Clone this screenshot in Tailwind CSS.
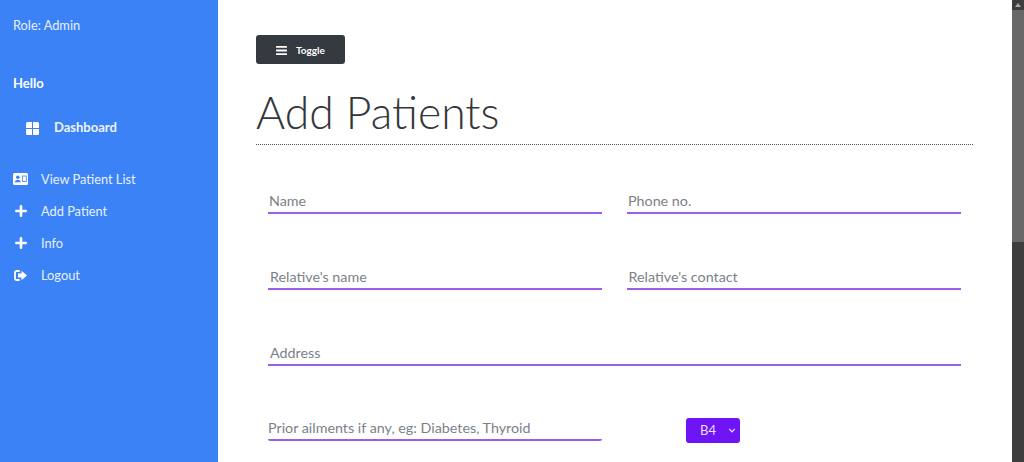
<!DOCTYPE html>
<html lang="en">
<head>
    <meta charset="UTF-8">
    <meta name="viewport" content="width=device-width, initial-scale=1.0">
    <title>Add Patients</title>
    <script src="https://cdn.jsdelivr.net/npm/@tailwindcss/browser@4"></script>
</head>
<body class="bg-white font-['Lato',sans-serif] overflow-hidden">
    <div class="flex h-[462px] overflow-hidden">
        <!-- Sidebar -->
        <aside class="w-[218px] shrink-0 bg-[#3b82f6] text-white">
            <p class="pl-[13px] pt-[17px] text-[12.8px] leading-[17px] text-[#e8f0fe]">Role: Admin</p>
            <h3 class="pl-[13px] pt-[40px] text-[13px] leading-[18px] font-bold">Hello</h3>
            <a class="flex items-center pl-[26px] mt-[27px] h-[18px] text-[13px] font-bold text-[#eef4ff]">
                <svg class="w-[13px] h-[13px] mr-[15px]" viewBox="0 0 13 13" fill="#fff"><path d="M0 1.5A1.5 1.5 0 0 1 1.5 0H6v6H0zM7 0h4.500A1.500 1.500 0 0 1 13 1.500V6H7zM0 7h6v6H1.500A1.500 1.500 0 0 1 0 11.500zM7 7h6v4.500a1.500 1.500 0 0 1-1.500 1.500H7z"/></svg>
                Dashboard
            </a>
            <nav class="mt-[33px] flex flex-col gap-[14px] text-[12.8px] leading-[18px] text-[#e8f0fe]">
                <a class="flex items-center h-[18px] pl-[13px]">
                    <svg class="w-[15px] h-[12px] mr-[13px]" viewBox="0 0 15 12"><rect width="15" height="12" rx="1.500" fill="#fff"/><circle cx="4.800" cy="4.300" r="1.800" fill="#3b82f6"/><path d="M1.800 9.300c0-1.700 1.300-2.600 3-2.600s3 .9 3 2.600z" fill="#3b82f6"/><rect x="9.500" y="3" width="3.800" height="5.500" fill="none" stroke="#3b82f6" stroke-width=".8"/></svg>
                    View Patient List
                </a>
                <a class="flex items-center h-[18px] pl-[15px]">
                    <svg class="w-[12px] h-[12px] mr-[14px]" viewBox="0 0 12 12" fill="none" stroke="#fff" stroke-width="2.600" stroke-linecap="round"><path d="M6 1.300v9.400M1.300 6h9.400"/></svg>
                    Add Patient
                </a>
                <a class="flex items-center h-[18px] pl-[15px]">
                    <svg class="w-[12px] h-[12px] mr-[14px]" viewBox="0 0 12 12" fill="none" stroke="#fff" stroke-width="2.600" stroke-linecap="round"><path d="M6 1.300v9.400M1.300 6h9.400"/></svg>
                    Info
                </a>
                <a class="flex items-center h-[18px] pl-[14px]">
                    <svg class="w-[13px] h-[11px] mr-[14px]" viewBox="0 0 13 11"><path d="M5 1H2.500A1.500 1.500 0 0 0 1 2.500v6A1.500 1.500 0 0 0 2.500 10H5" fill="none" stroke="#fff" stroke-width="1.800" stroke-linecap="round"/><path d="M7.500.8 13 5.500 7.500 10.200V7.500H4v-4h3.500z" fill="#fff"/></svg>
                    Logout
                </a>
            </nav>
        </aside>

        <!-- Main content -->
        <main class="flex-1 min-w-0 pl-[38px] pr-[39px] pt-[35px]">
            <button class="flex items-center w-[89px] h-[29px] pl-[20px] pt-[1px] bg-[#343a40] rounded-[3px] text-white text-[10px] font-bold">
                <svg class="w-[11px] h-[11px] mr-[9px]" viewBox="0 0 12 11" fill="#fff"><rect width="12" height="2" y=".5" rx=".6"/><rect width="12" height="2" y="4.500" rx=".6"/><rect width="12" height="2" y="8.500" rx=".6"/></svg>
                Toggle
            </button>
            <h1 class="mt-[21px] mb-[-1px] text-[44.5px] leading-[54px] font-light text-[#33373b]">Add Patients</h1>
            <div class="mt-[6px] border-t border-dotted border-[#555]"></div>

            <form class="px-[12px] mt-[44px]">
                <div class="grid grid-cols-2 gap-x-[25px]">
                    <input class="w-full h-[25px] px-[1px] border-b-2 border-[#9a5fe8] text-[14.3px] outline-none placeholder:text-[#7b8188]" placeholder="Name">
                    <input class="w-full h-[25px] px-[1px] border-b-2 border-[#9a5fe8] text-[14.3px] outline-none placeholder:text-[#7b8188]" placeholder="Phone no.">
                </div>
                <div class="grid grid-cols-2 gap-x-[25px] mt-[51px]">
                    <input class="w-full h-[25px] px-[2px] border-b-2 border-[#9a5fe8] text-[14.3px] outline-none placeholder:text-[#7b8188]" placeholder="Relative's name">
                    <input class="w-full h-[25px] px-[1.500px] border-b-2 border-[#9a5fe8] text-[14.3px] outline-none placeholder:text-[#7b8188]" placeholder="Relative's contact">
                </div>
                <input class="block w-full h-[25px] mt-[51px] px-[2px] border-b-2 border-[#9a5fe8] text-[14.3px] outline-none placeholder:text-[#7b8188]" placeholder="Address">
                <div class="flex items-start mt-[50px]">
                    <input class="w-[334px] h-[25px] border-b-2 border-[#9a5fe8] rounded-b-[2px] text-[14.3px] outline-none placeholder:text-[#7b8188]" placeholder="Prior ailments if any, eg: Diabetes, Thyroid">
                    <div class="ml-[84px] mt-[2px] flex items-center w-[54px] h-[25px] pl-[14px] bg-[#6f14f5] rounded-[3px] text-[13px] text-[#eadfff]">
                        B4
                        <svg class="w-[8px] h-[5px] ml-[12px]" viewBox="0 0 7 5" fill="none" stroke="#e6d8ff" stroke-width="1.200"><path d="M.8 1 3.500 3.800 6.200 1"/></svg>
                    </div>
                </div>
            </form>
        </main>

        <!-- Scrollbar -->
        <div class="w-[12px] shrink-0 flex flex-col bg-[#3e3e3e]">
            <div class="h-[10px] flex items-center justify-center">
                <svg class="w-[6px] h-[4px]" viewBox="0 0 6 4" fill="#aaa"><path d="M3 0 6 4H0z"/></svg>
            </div>
            <div class="h-[232px] bg-[#686868]"></div>
        </div>
    </div>
</body>
</html>
